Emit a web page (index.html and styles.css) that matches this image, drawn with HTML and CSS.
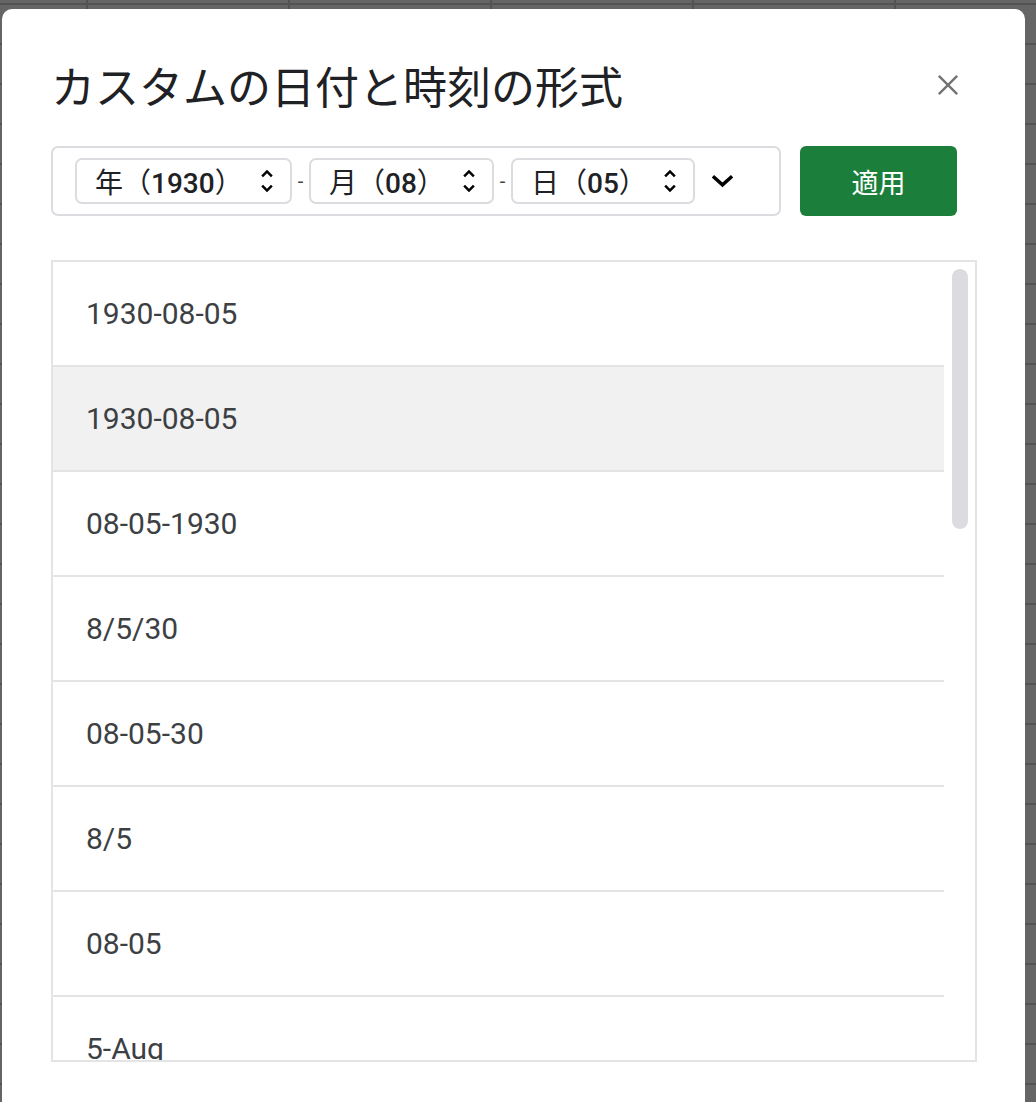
FILE: index.html
```html
<!DOCTYPE html>
<html lang="ja">
<head>
    <meta charset="UTF-8">
    <meta name="viewport" content="width=device-width, initial-scale=1.0">
    <title>カスタムの日付と時刻の形式</title>
    <link rel="stylesheet" href="styles.css">
</head>
<body>

    <div class="dialog">
        <div class="dialog-header">
            <h2 class="dialog-title">カスタムの日付と時刻の形式</h2>
            <button type="button" class="close-btn" aria-label="閉じる">
                <svg width="24" height="24" viewBox="0 0 24 24"><path d="M2 2L22 22M22 2L2 22" stroke="#737373" stroke-width="2.6" fill="none"/></svg>
            </button>
        </div>

        <div class="toolbar">
            <div class="format-box">
                <div class="part part-year">
                    <span class="part-label">年（<b>1930</b>）</span>
                    <svg class="updown" viewBox="0 0 24 24"><path d="M12 5.83L15.17 9l1.41-1.41L12 3 7.41 7.59 8.83 9 12 5.83zm0 12.34L8.83 15l-1.41 1.41L12 21l4.59-4.59L15.17 15 12 18.17z"/></svg>
                </div>
                <span class="sep">-</span>
                <div class="part part-month">
                    <span class="part-label">月（<b>08</b>）</span>
                    <svg class="updown" viewBox="0 0 24 24"><path d="M12 5.83L15.17 9l1.41-1.41L12 3 7.41 7.59 8.83 9 12 5.83zm0 12.34L8.83 15l-1.41 1.41L12 21l4.59-4.59L15.17 15 12 18.17z"/></svg>
                </div>
                <span class="sep">-</span>
                <div class="part part-day">
                    <span class="part-label">日（<b>05</b>）</span>
                    <svg class="updown" viewBox="0 0 24 24"><path d="M12 5.83L15.17 9l1.41-1.41L12 3 7.41 7.59 8.83 9 12 5.83zm0 12.34L8.83 15l-1.41 1.41L12 21l4.59-4.59L15.17 15 12 18.17z"/></svg>
                </div>
                <svg class="more" viewBox="0 0 24 16"><path d="M2 3L12 12L22 3" stroke="#000" stroke-width="3.6" fill="none"/></svg>
            </div>
            <button type="button" class="btn-apply">適用</button>
        </div>

        <div class="format-list">
            <div class="rows">
                <div class="row">1930-08-05</div>
                <div class="row active">1930-08-05</div>
                <div class="row">08-05-1930</div>
                <div class="row">8/5/30</div>
                <div class="row">08-05-30</div>
                <div class="row">8/5</div>
                <div class="row">08-05</div>
                <div class="row">5-Aug</div>
            </div>
            <div class="scroll-track">
                <div class="scroll-thumb"></div>
            </div>
        </div>
    </div>

</body>
</html>
```

FILE: styles.css
```css
body {
    margin: 0;
    height: 1102px;
    overflow: hidden;
    background-color: #646564;
    background-image:
        linear-gradient(to right, #525352 2px, transparent 2px),
        linear-gradient(to bottom, #525352 2px, transparent 2px);
    background-size: 202px 100%, 100% 40px;
    background-position: 86px 0, 0 43px;
    font-family: Roboto, "Noto Sans CJK JP", sans-serif;
}
.dialog {
    margin: 9px 0 0 2px;
    width: 1023px;
    height: 1110px;
    box-sizing: border-box;
    padding: 50px 48px 0 49px;
    background: #fff;
    border-radius: 10px;
}
.dialog-header {
    display: flex;
    align-items: center;
    justify-content: space-between;
    height: 52px;
}
.dialog-title {
    margin: 0;
    font-family: "Noto Sans CJK JP", sans-serif;
    font-weight: 400;
    font-size: 44px;
    line-height: 52px;
    color: #202124;
}
.close-btn {
    display: flex;
    align-items: center;
    justify-content: center;
    width: 40px;
    height: 40px;
    margin-right: 9px;
    padding: 0;
    border: none;
    background: none;
}
.close-btn svg {
    width: 22px;
    height: 22px;
}
.toolbar {
    display: flex;
    gap: 19px;
    margin-top: 35px;
}
.format-box {
    display: flex;
    align-items: center;
    width: 730px;
    height: 70px;
    box-sizing: border-box;
    padding-left: 22px;
    border: 2px solid #dcdce0;
    border-radius: 7px;
}
.part {
    display: flex;
    align-items: center;
    justify-content: space-between;
    height: 46px;
    box-sizing: border-box;
    padding: 0 8px 0 18px;
    border: 2px solid #dcdce0;
    border-radius: 7px;
}
.part-year { width: 217px; }
.part-month { width: 185px; }
.part-day { width: 184px; }
.part-label {
    font-size: 28px;
    font-weight: 400;
    color: #202124;
    white-space: nowrap;
}
.part-label b {
    font-weight: 500;
}
.updown {
    width: 30px;
    height: 30px;
    fill: #000;
}
.sep {
    width: 17px;
    text-align: center;
    font-size: 20px;
    color: #444;
}
.more {
    width: 23px;
    height: 16px;
    margin-left: 16px;
}
.btn-apply {
    width: 157px;
    height: 70px;
    padding: 0;
    border: none;
    border-radius: 6px;
    background-color: #1b7f3b;
    color: #fff;
    font-family: "Noto Sans CJK JP", sans-serif;
    font-size: 27px;
    font-weight: 400;
}
.format-list {
    display: flex;
    margin-top: 44px;
    width: 926px;
    height: 802px;
    box-sizing: border-box;
    border: 2px solid #e4e4e4;
    overflow: hidden;
}
.rows {
    width: 891px;
}
.row {
    display: flex;
    align-items: center;
    height: 103px;
    padding-left: 33px;
    border-bottom: 2px solid #e4e4e4;
    font-size: 30px;
    color: #3c4043;
}
.row.active {
    background-color: #f1f1f1;
}
.scroll-track {
    flex: 1;
    padding: 7px 7px 0 8px;
}
.scroll-thumb {
    height: 260px;
    border-radius: 8px;
    background-color: #dcdce0;
}
```
